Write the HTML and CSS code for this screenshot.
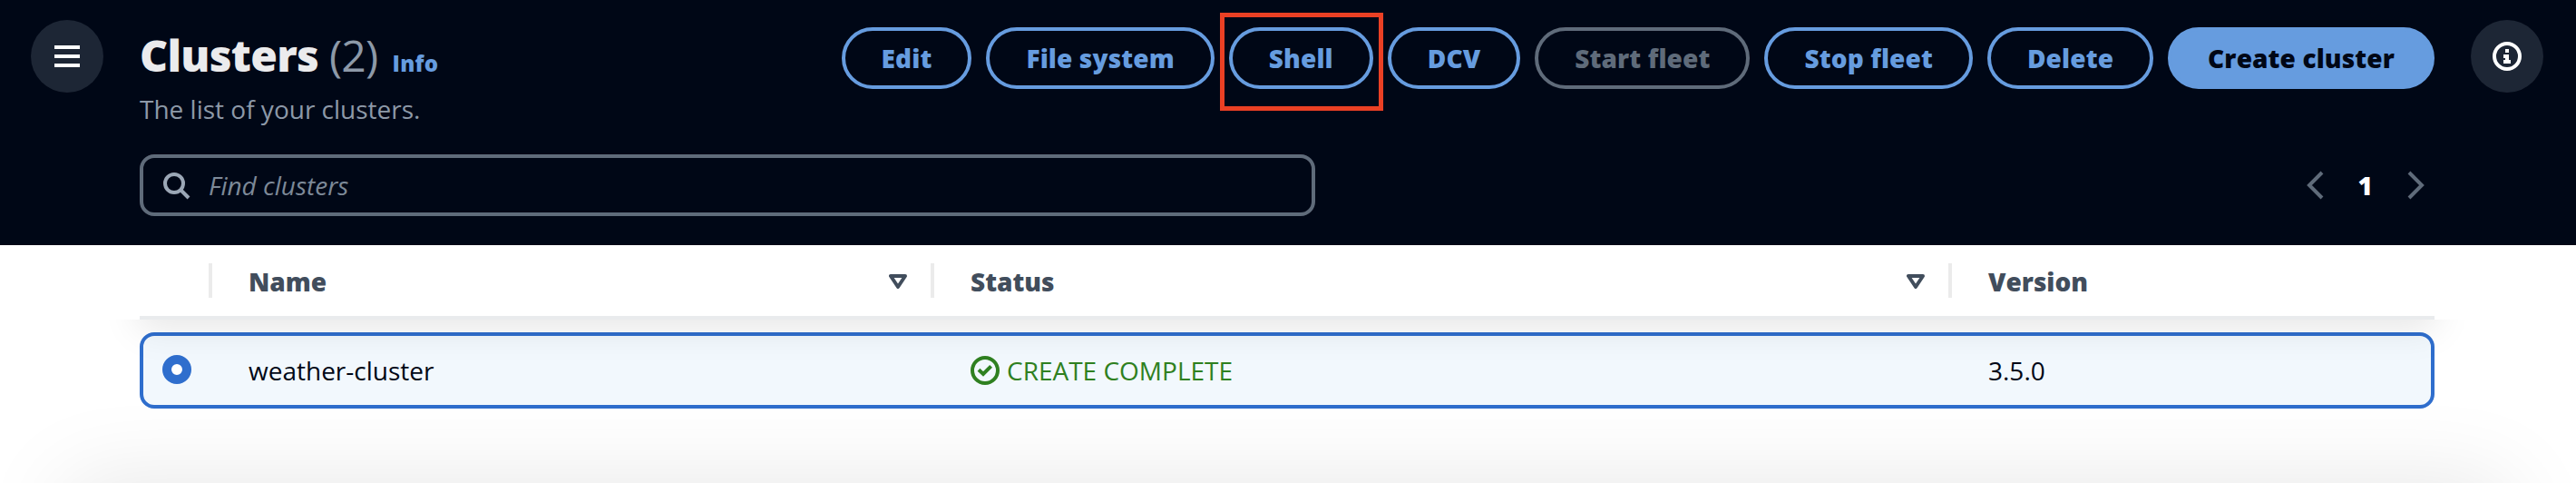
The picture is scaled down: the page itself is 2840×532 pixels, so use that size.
FILE: index.html
```html
<!DOCTYPE html>
<html lang="en">
<head>
<meta charset="utf-8">
<title>Clusters</title>
<link rel="stylesheet" href="styles.css">
</head>
<body>
<div class="page">
  <header class="hero">
    <button class="round-btn" aria-label="Open navigation">
      <svg width="32" height="32" viewBox="0 0 16 16" fill="none" stroke="currentColor" stroke-width="2"><path d="M1 3h14M1 8h14M1 13h14"/></svg>
    </button>
    <div class="hero-main">
      <div class="title-row">
        <div class="heading">
          <h1 class="title">Clusters <span class="count">(2)</span><a class="info">Info</a></h1>
          <p class="description">The list of your clusters.</p>
        </div>
        <div class="actions">
          <button class="btn">Edit</button>
          <button class="btn">File system</button>
          <button class="btn highlighted">Shell</button>
          <button class="btn">DCV</button>
          <button class="btn disabled">Start fleet</button>
          <button class="btn">Stop fleet</button>
          <button class="btn">Delete</button>
          <button class="btn primary">Create cluster</button>
        </div>
      </div>
      <div class="tools-row">
        <div class="search">
          <svg width="32" height="32" viewBox="0 0 16 16" fill="none" stroke="currentColor" stroke-width="2"><circle cx="7" cy="7" r="5"/><path d="M15 15l-4.5-4.5"/></svg>
          <span>Find clusters</span>
        </div>
        <div class="pagination">
          <svg width="32" height="32" viewBox="0 0 16 16" fill="none" stroke="currentColor" stroke-width="2"><path d="M12 1L5 8l7 7"/></svg>
          <span class="page-number">1</span>
          <svg width="32" height="32" viewBox="0 0 16 16" fill="none" stroke="currentColor" stroke-width="2"><path d="M4 1l7 7-7 7"/></svg>
        </div>
      </div>
    </div>
    <button class="round-btn" aria-label="Open help">
      <svg width="32" height="32" viewBox="0 0 16 16"><circle cx="8" cy="8" r="7" fill="none" stroke="currentColor" stroke-width="2"/><path d="M7 4h2v2H7zM6 7h3v3h1v2H6v-2h1V9H6z" fill="currentColor"/></svg>
    </button>
  </header>
  <main class="table">
    <div class="thead grid">
      <div class="th"></div>
      <div class="th">Name<svg class="sort" width="20" height="16" viewBox="0 0 20 16"><path d="M2 2h16l-8 12z" fill="none" stroke="currentColor" stroke-width="4" stroke-linejoin="round"/></svg></div>
      <div class="th">Status<svg class="sort" width="20" height="16" viewBox="0 0 20 16"><path d="M2 2h16l-8 12z" fill="none" stroke="currentColor" stroke-width="4" stroke-linejoin="round"/></svg></div>
      <div class="th">Version</div>
    </div>
    <div class="body-area">
      <div class="row grid">
        <div class="select"><span class="radio"></span></div>
        <div class="td">weather-cluster</div>
        <div class="td status"><svg width="32" height="32" viewBox="0 0 16 16" fill="none" stroke="currentColor" stroke-width="2"><circle cx="8" cy="8" r="7"/><path d="M4.5 7.6L7 10l4.3-4.3"/></svg>CREATE COMPLETE</div>
        <div class="td">3.5.0</div>
      </div>
    </div>
  </main>
</div>
</body>
</html>
```
FILE: styles.css
```css
* { box-sizing: border-box; }
body {
  margin: 0;
  background: #fff;
  color: #000716;
  font: 400 28px/40px "Open Sans", "Noto Sans", sans-serif;
}
.page { position: relative; height: 532px; overflow: hidden; }
button { font: inherit; margin: 0; }
svg { display: block; flex: none; }

.hero {
  display: flex;
  align-items: flex-start;
  gap: 40px;
  height: 270px;
  padding: 22px 36px 0 34px;
  background: #000716;
  color: #fff;
}
.round-btn {
  display: flex;
  align-items: center;
  justify-content: center;
  flex: none;
  width: 80px;
  height: 80px;
  padding: 0;
  border: 0;
  border-radius: 50%;
  background: #1d2635;
  color: #fff;
}
.hero-main { flex: 1; }
.title-row {
  display: flex;
  justify-content: space-between;
  align-items: flex-start;
  height: 148px;
  padding-top: 8px;
}
.title {
  margin: 0;
  padding-top: 1px;
  color: #ebebed;
  font-size: 48px;
  line-height: 60px;
  font-weight: 800;
  letter-spacing: -0.7px;
}
.count { color: #8d99a8; font-weight: 400; }
.info {
  margin-left: 16px;
  color: #669cdf;
  font-size: 24px;
  letter-spacing: 0.24px;
}
.description { margin: 0; color: #8d99a8; }
.actions { display: flex; gap: 16px; }
.btn {
  position: relative;
  height: 68px;
  padding: 0 40px;
  border: 4px solid #669cdf;
  border-radius: 40px;
  background: transparent;
  color: #669cdf;
  font-weight: 800;
  letter-spacing: 0.12px;
  white-space: nowrap;
}
.btn.disabled { color: #5f6b7a; border-color: #5f6b7a; }
.btn.primary { background: #669cdf; color: #000716; }
.highlighted::after {
  content: "";
  position: absolute;
  inset: -20px -15px -28px -14px;
  border: 5px solid #eb4024;
}
.tools-row { display: flex; justify-content: space-between; align-items: center; }
.search {
  display: flex;
  align-items: center;
  gap: 20px;
  width: 1296px;
  height: 68px;
  padding-left: 20px;
  border: 4px solid #5f6b7a;
  border-radius: 16px;
  color: #9ba7b6;
}
.search span { color: #7d8998; font-style: italic; }
.pagination {
  display: flex;
  align-items: center;
  gap: 32px;
  padding-right: 4px;
  color: #5f6b7a;
}
.page-number { color: #fff; font-weight: 800; }

.table { margin: 0 156px 0 154px; }
.grid { display: grid; grid-template-columns: 80px 796px 1122px 1fr; align-items: center; }
.thead {
  height: 82px;
  border-bottom: 4px solid #e9ebed;
  color: #414d5c;
  font-weight: 800;
}
.th {
  display: flex;
  align-items: center;
  justify-content: space-between;
  height: 38px;
  padding: 2px 26px 0 40px;
  border-right: 4px solid #ebebeb;
}
.th:last-child { border-right: 0; }
.sort { margin-top: -1px; }
.body-area { position: relative; padding-top: 14px; }
.row {
  height: 84px;
  border: 4px solid #2f6ecd;
  border-radius: 16px;
  background: #f2f8fd;
  grid-template-columns: 76px 796px 1122px 1fr;
}
.select { padding-left: 21px; }
.radio {
  display: block;
  width: 32px;
  height: 32px;
  margin-top: -2px;
  border: 10px solid #2f6ecd;
  border-radius: 50%;
  background: #fff;
}
.td { padding-left: 40px; }
.status { display: flex; align-items: center; gap: 8px; color: #2f8020; }

.body-area::before {
  content: "";
  position: absolute;
  z-index: 1;
  left: 0;
  right: 0;
  top: -82px;
  height: 82px;
  box-shadow: 0 8px 40px 2px rgba(0, 0, 0, 0.1);
  clip-path: inset(82px -80px -80px -80px);
}
/* Shadow of the panel below the viewport */
.page::after {
  content: "";
  position: absolute;
  left: 74px;
  right: 76px;
  top: 532px;
  height: 200px;
  box-shadow: 0 0 100px rgba(0, 0, 0, 0.1);
}
```
